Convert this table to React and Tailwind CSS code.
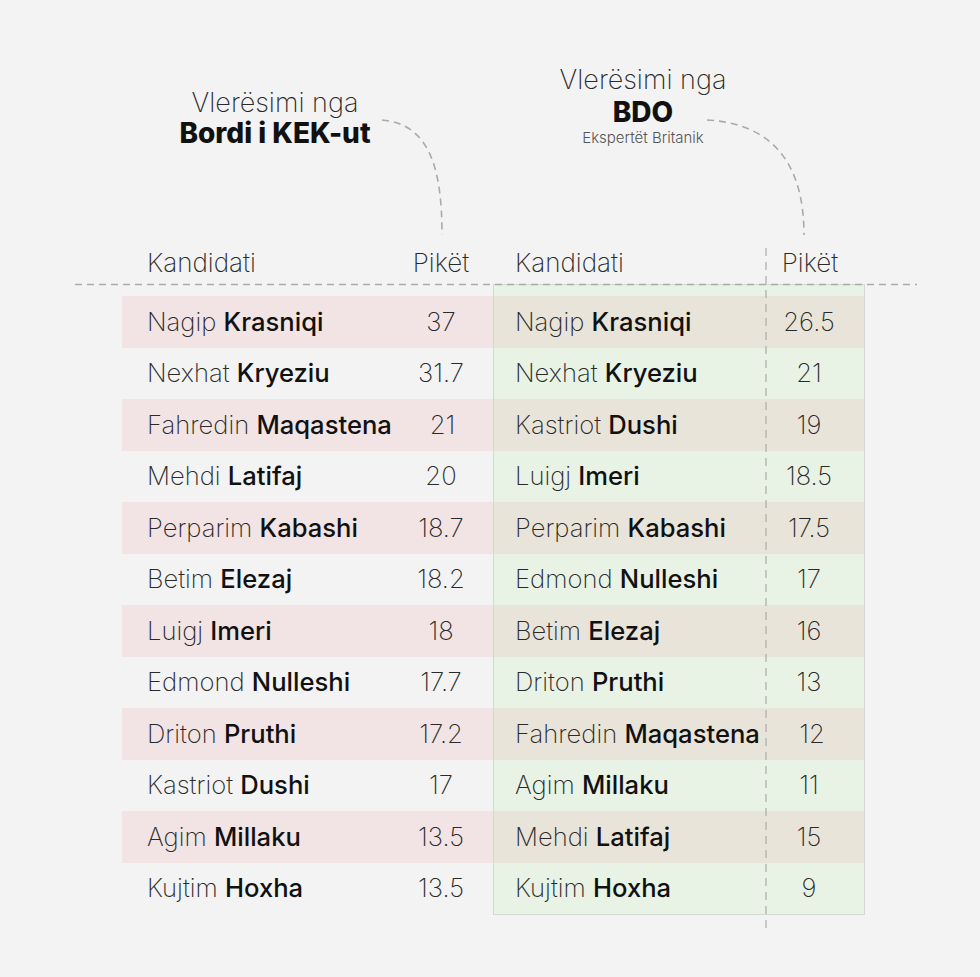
import React from "react";

const left = [
  ["Nagip", "Krasniqi", "37"],
  ["Nexhat", "Kryeziu", "31.7"],
  ["Fahredin", "Maqastena", "21"],
  ["Mehdi", "Latifaj", "20"],
  ["Perparim", "Kabashi", "18.7"],
  ["Betim", "Elezaj", "18.2"],
  ["Luigj", "Imeri", "18"],
  ["Edmond", "Nulleshi", "17.7"],
  ["Driton", "Pruthi", "17.2"],
  ["Kastriot", "Dushi", "17"],
  ["Agim", "Millaku", "13.5"],
  ["Kujtim", "Hoxha", "13.5"],
];

const right = [
  ["Nagip", "Krasniqi", "26.5"],
  ["Nexhat", "Kryeziu", "21"],
  ["Kastriot", "Dushi", "19"],
  ["Luigj", "Imeri", "18.5"],
  ["Perparim", "Kabashi", "17.5"],
  ["Edmond", "Nulleshi", "17"],
  ["Betim", "Elezaj", "16"],
  ["Driton", "Pruthi", "13"],
  ["Fahredin", "Maqastena", "12"],
  ["Agim", "Millaku", "11"],
  ["Mehdi", "Latifaj", "15"],
  ["Kujtim", "Hoxha", "9"],
];

const font = { fontFamily: "Inter, 'Noto Sans', sans-serif" };

export default function App() {
  return (
    <div
      className="relative w-[980px] h-[977px] bg-[#f3f3f3] overflow-hidden text-[#2a2a2a]"
      style={font}
    >
      {/* Titles */}
      <div className="flex h-[240px]">
        <div className="ml-[165px] mt-[88px] w-[220px] flex flex-col items-center">
          <div className="text-[27px] leading-[30px] font-extralight">Vlerësimi nga</div>
          <div className="text-[28px] leading-[30px] font-extrabold text-[#111]">Bordi i KEK-ut</div>
        </div>
        <div className="ml-[148px] mt-[65px] w-[220px] flex flex-col items-center">
          <div className="text-[27px] leading-[30px] font-extralight">Vlerësimi nga</div>
          <div className="text-[28px] leading-[34px] font-extrabold text-[#111]">BDO</div>
          <div className="text-[15px] leading-[18px] font-light text-[#555]">Ekspertët Britanik</div>
        </div>
      </div>

      {/* Column headers */}
      <div className="flex pl-[122px] h-[44px] items-center text-[26px] font-extralight">
        <div className="w-[371px] flex">
          <div className="flex-1 pl-[25px]">Kandidati</div>
          <div className="w-[104px] text-center">Pikët</div>
        </div>
        <div className="w-[372px] flex">
          <div className="flex-1 pl-[22px]">Kandidati</div>
          <div className="w-[110px] text-center">Pikët</div>
        </div>
      </div>

      {/* Table */}
      <div className="flex pl-[122px]">
        <div className="w-[371px] pt-[12px] flex flex-col">
          {left.map(([f, l, p], i) => (
            <div
              key={i}
              className={`flex items-center h-[51.5px] text-[25.6px] ${i % 2 === 0 ? "bg-[#f2e4e4]" : ""}`}
            >
              <div className="flex-1 pl-[25px] whitespace-nowrap">
                <span className="font-extralight">{f}</span>{" "}
                <span className="font-medium text-[#111]">{l}</span>
              </div>
              <div className="w-[104px] text-center font-extralight">{p}</div>
            </div>
          ))}
        </div>
        <div className="w-[372px] pt-[11px] flex flex-col bg-[#e8f3e6] border border-[#d6d6d6]">
          {right.map(([f, l, p], i) => (
            <div
              key={i}
              className={`flex items-center h-[51.5px] text-[25.6px] ${i % 2 === 0 ? "bg-[#e9e4da]" : ""}`}
            >
              <div className="flex-1 pl-[21px] whitespace-nowrap">
                <span className="font-extralight">{f}</span>{" "}
                <span className="font-medium text-[#111]">{l}</span>
              </div>
              <div className="w-[110px] text-center font-extralight">{p}</div>
            </div>
          ))}
        </div>
      </div>

      {/* Dashed overlays */}
      <svg className="absolute left-0 top-0 pointer-events-none" width="980" height="977">
        <g fill="none" stroke="#aaaaaa" strokeWidth="1.6" strokeDasharray="7 5">
          <path d="M75 284.5 H917" />
          <path d="M766 248 V928" strokeWidth="1.2" strokeDasharray="8 6" />
          <path d="M382 120 C428 124 442 165 442 235" />
          <path d="M707 120 C778 124 804 170 804 235" />
        </g>
      </svg>
    </div>
  );
}
